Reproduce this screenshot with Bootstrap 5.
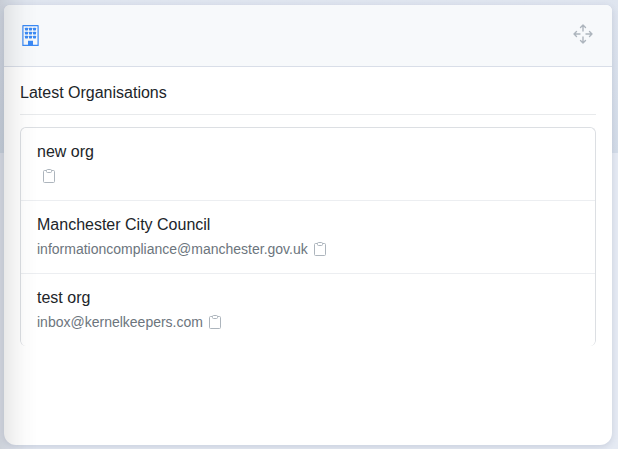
<!DOCTYPE html>
<html lang="en">
<head>
<meta charset="utf-8">
<meta name="viewport" content="width=device-width, initial-scale=1">
<title>Latest Organisations</title>
<link href="https://cdn.jsdelivr.net/npm/bootstrap@5.3.0/dist/css/bootstrap.min.css" rel="stylesheet">
<style>
  body {
    font-family: "Liberation Sans", Arial, sans-serif;
    background: linear-gradient(#dfe5ef, #d3dce8 153px, #e5eaf3 153px);
    padding: 5px 6px 4px 4px;
  }
  .org-panel {
    border: 0;
    border-radius: 6px 6px 12px 12px;
    overflow: hidden;
    box-shadow: 0 2px 6px rgba(60, 75, 110, .16);
  }
  .page-shade {
    position: fixed;
    inset: 0 auto 0 0;
    width: 38px;
    pointer-events: none;
    background: linear-gradient(to right, rgba(0, 0, 0, .1), rgba(0, 0, 0, .05) 35%, rgba(0, 0, 0, .015) 65%, rgba(0, 0, 0, 0));
  }
  .org-header {
    height: 62px;
    background: #f7f9fb;
    border-bottom: 1px solid #d9dee8;
  }
  .org-body { padding: 14px 16px; }
  .org-title { line-height: 24px; padding-bottom: 9px; border-bottom: 1px solid #e8eaec; }
  .org-list { margin-top: 12px; border: 1px solid #dcdfe3; border-bottom: 0; border-radius: 6px; }
  .org-list .list-group-item { padding: 12px 16px; border: 0; border-bottom: 1px solid #eceef1; }
  .org-list .list-group-item:last-child { border-bottom: 0; }
  .org-name { font-size: 16px; line-height: 24px; }
  .org-mail { font-size: 14px; height: 24px; color: #6c757d; }
  .plain-btn { border: 0; background: none; padding: 0; line-height: 0; color: #adb5bd; }
  .copy-btn { margin-left: 5px; }
</style>
<script src="https://cdn.jsdelivr.net/npm/bootstrap@5.3.0/dist/js/bootstrap.bundle.min.js"></script>
</head>
<body class="min-vh-100 d-flex flex-column">
<svg width="0" height="0" class="position-absolute" aria-hidden="true">
  <symbol id="clipboard" viewBox="0 0 14 14">
    <path d="M4.500 1.500H2.500q-1 0-1 1v10q0 1 1 1h9q1 0 1-1v-10q0-1-1-1h-2" fill="none" stroke="currentColor"/>
    <rect x="4.500" y=".5" width="5" height="3" rx="1" fill="none" stroke="currentColor"/>
  </symbol>
</svg>
<main class="card org-panel flex-grow-1">
  <header class="org-header d-flex align-items-center justify-content-between px-3">
    <svg width="21" height="21" viewBox="0 0 21 21" fill="#3b8af5" aria-hidden="true">
      <path d="M3 0h15q.7 0 .7.7V21H2.300V.7Q2.300 0 3 0zM3.500 1.200v18.600h14V1.200z" fill-rule="evenodd"/>
      <g id="windows">
        <rect x="5" y="2.700" width="3" height="2.700" rx=".6"/><rect x="9" y="2.700" width="3" height="2.700" rx=".6"/><rect x="13" y="2.700" width="3" height="2.700" rx=".6"/>
        <rect x="5" y="6.700" width="3" height="2.700" rx=".6"/><rect x="9" y="6.700" width="3" height="2.700" rx=".6"/><rect x="13" y="6.700" width="3" height="2.700" rx=".6"/>
        <rect x="5" y="10.700" width="3" height="2.700" rx=".6"/><rect x="9" y="10.700" width="3" height="2.700" rx=".6"/><rect x="13" y="10.700" width="3" height="2.700" rx=".6"/>
      </g>
      <path d="M8 15.700h5V21H8z"/>
    </svg>
    <button type="button" class="plain-btn pb-1" aria-label="Move panel">
      <svg width="26" height="22" viewBox="-3 -1 26 22" fill="none" stroke="currentColor" stroke-width="1.400" stroke-linecap="round" stroke-linejoin="round">
        <path d="M10 7V1M7.500 3.500 10 1l2.500 2.500M10 13v6m-2.500-2.500L10 19l2.500-2.500M7 10H1m2.500-2.500L1 10l2.500 2.500M13 10h6m-2.500-2.500L19 10l-2.500 2.500"/>
      </svg>
    </button>
  </header>
  <div class="org-body">
    <h1 class="org-title fs-6 fw-normal mb-0">Latest Organisations</h1>
    <ul class="list-group org-list">
      <li class="list-group-item">
        <h2 class="org-name fw-normal mb-0">new org</h2>
        <div class="org-mail d-flex align-items-center">
          <button type="button" class="plain-btn copy-btn" aria-label="Copy email"><svg width="14" height="14"><use href="#clipboard"/></svg></button>
        </div>
      </li>
      <li class="list-group-item">
        <h2 class="org-name fw-normal mb-0">Manchester City Council</h2>
        <div class="org-mail d-flex align-items-center">
          <span>informationcompliance@manchester.gov.uk</span>
          <button type="button" class="plain-btn copy-btn" aria-label="Copy email"><svg width="14" height="14"><use href="#clipboard"/></svg></button>
        </div>
      </li>
      <li class="list-group-item">
        <h2 class="org-name fw-normal mb-0">test org</h2>
        <div class="org-mail d-flex align-items-center">
          <span>inbox@kernelkeepers.com</span>
          <button type="button" class="plain-btn copy-btn" aria-label="Copy email"><svg width="14" height="14"><use href="#clipboard"/></svg></button>
        </div>
      </li>
    </ul>
  </div>
</main>
<div class="page-shade"></div>
</body>
</html>
